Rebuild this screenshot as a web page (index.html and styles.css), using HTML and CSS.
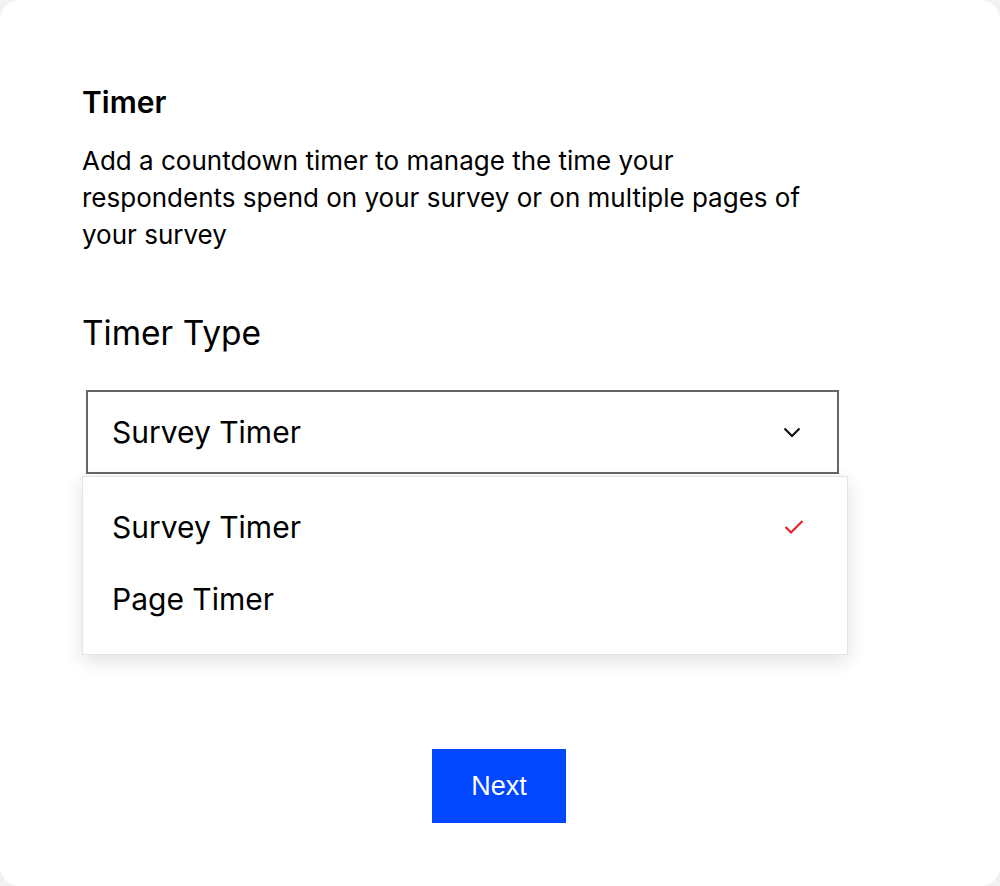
FILE: index.html
```html
<!DOCTYPE html>
<html lang="en">
<head>
<meta charset="utf-8">
<title>Timer</title>
<link rel="stylesheet" href="styles.css">
</head>
<body>
<main class="card">
  <section class="content">
    <h2 class="title">Timer</h2>
    <p class="desc">Add a countdown timer to manage the time your respondents spend on your survey or on multiple pages of your survey</p>
    <h3 class="label">Timer Type</h3>
    <div class="select">
      <div class="select-box">
        <span class="select-value">Survey Timer</span>
        <svg class="chevron" width="18" height="11" viewBox="0 0 18 11" aria-hidden="true"><path d="M1.5 1.5 L9 9 L16.5 1.5" fill="none" stroke="#111" stroke-width="2.2"/></svg>
      </div>
      <ul class="menu">
        <li class="option">
          <span>Survey Timer</span>
          <svg class="check" width="20" height="16" viewBox="0 0 20 16" aria-hidden="true"><path d="M1.5 8 L7 13.5 L18.5 2" fill="none" stroke="#e4232b" stroke-width="2.2"/></svg>
        </li>
        <li class="option"><span>Page Timer</span></li>
      </ul>
    </div>
  </section>
  <div class="actions">
    <button class="next" type="button">Next</button>
  </div>
</main>
</body>
</html>
```

FILE: styles.css
```css
* { box-sizing: border-box; }
html, body { margin: 0; padding: 0; }
body {
  background: #f2f2f2;
  font-family: Inter, "Noto Sans", sans-serif;
  color: #000;
}
.card {
  width: 1000px;
  height: 886px;
  background: #fff;
  border-radius: 20px;
  display: flex;
  flex-direction: column;
}
.content {
  padding: 84px 0 0 82px;
}
.title {
  margin: 0;
  font-size: 30px;
  font-weight: 600;
  line-height: 36px;
}
.desc {
  margin: 22px 0 0;
  width: 730px;
  font-size: 26px;
  line-height: 37px;
  font-weight: 400;
}
.label {
  margin: 58px 0 0;
  font-size: 33.5px;
  font-weight: 400;
  line-height: 44px;
}
.select {
  margin-top: 35px;
  width: 766px;
}
.select-box {
  margin-left: 4px;
  width: 753px;
  height: 84px;
  border: 2px solid #666;
  display: flex;
  align-items: center;
  justify-content: space-between;
  padding: 0 36px 0 24px;
}
.select-value, .option span {
  font-size: 30px;
}
.menu {
  list-style: none;
  margin: 2px 0 0;
  padding: 14px 0 19px;
  width: 766px;
  border: 1px solid #e4e4e4;
  background: #fff;
  box-shadow: 0 6px 18px rgba(0,0,0,0.12);
}
.option {
  height: 72px;
  display: flex;
  align-items: center;
  justify-content: space-between;
  padding: 0 43px 0 29px;
}
.actions {
  margin-top: 94px;
  display: flex;
  justify-content: center;
}
.next {
  width: 134px;
  height: 74px;
  margin-right: 2px;
  border: none;
  background: #0047ff;
  color: #fff;
  font-family: "Liberation Sans", Arial, sans-serif;
  font-size: 27px;
  cursor: pointer;
}
```
